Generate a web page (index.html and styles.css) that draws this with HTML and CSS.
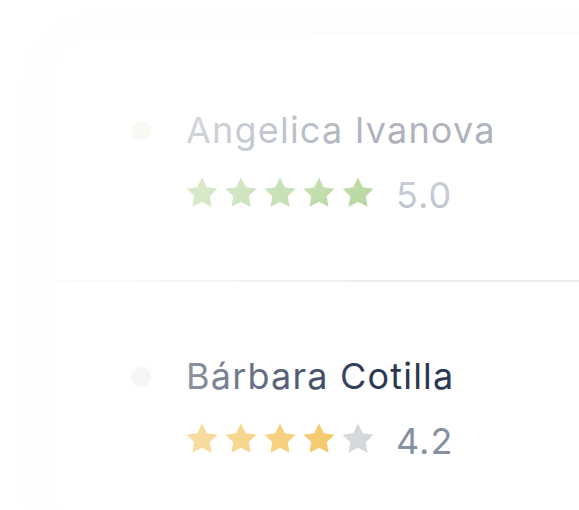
FILE: index.html
```html
<!DOCTYPE html>
<html lang="en">
<head>
<meta charset="utf-8">
<title>Ratings</title>
<link rel="stylesheet" href="styles.css">
</head>
<body>
<div class="stage">
  <div class="card">
    <div class="row row-sep">
      <span class="dot dot-green"></span>
      <div class="info">
        <div class="name">Angelica Ivanova</div>
        <div class="rating">
          <div class="stars stars-green">
            <svg viewBox="0 0 24 24"><path d="M12 1.6l3.2 6.5 7.1 1-5.15 5 1.2 7.1L12 17.85 5.65 21.2l1.2-7.1-5.15-5 7.1-1z"/></svg>
            <svg viewBox="0 0 24 24"><path d="M12 1.6l3.2 6.5 7.1 1-5.15 5 1.2 7.1L12 17.85 5.65 21.2l1.2-7.1-5.15-5 7.1-1z"/></svg>
            <svg viewBox="0 0 24 24"><path d="M12 1.6l3.2 6.5 7.1 1-5.15 5 1.2 7.1L12 17.85 5.65 21.2l1.2-7.1-5.15-5 7.1-1z"/></svg>
            <svg viewBox="0 0 24 24"><path d="M12 1.6l3.2 6.5 7.1 1-5.15 5 1.2 7.1L12 17.85 5.65 21.2l1.2-7.1-5.15-5 7.1-1z"/></svg>
            <svg viewBox="0 0 24 24"><path d="M12 1.6l3.2 6.5 7.1 1-5.15 5 1.2 7.1L12 17.85 5.65 21.2l1.2-7.1-5.15-5 7.1-1z"/></svg>
          </div>
          <span class="score">5.0</span>
        </div>
      </div>
    </div>
    <div class="row">
      <span class="dot dot-grey"></span>
      <div class="info">
        <div class="name">Bárbara Cotilla</div>
        <div class="rating">
          <div class="stars stars-gold">
            <svg viewBox="0 0 24 24"><path d="M12 1.6l3.2 6.5 7.1 1-5.15 5 1.2 7.1L12 17.85 5.65 21.2l1.2-7.1-5.15-5 7.1-1z"/></svg>
            <svg viewBox="0 0 24 24"><path d="M12 1.6l3.2 6.5 7.1 1-5.15 5 1.2 7.1L12 17.85 5.65 21.2l1.2-7.1-5.15-5 7.1-1z"/></svg>
            <svg viewBox="0 0 24 24"><path d="M12 1.6l3.2 6.5 7.1 1-5.15 5 1.2 7.1L12 17.85 5.65 21.2l1.2-7.1-5.15-5 7.1-1z"/></svg>
            <svg viewBox="0 0 24 24"><path d="M12 1.6l3.2 6.5 7.1 1-5.15 5 1.2 7.1L12 17.85 5.65 21.2l1.2-7.1-5.15-5 7.1-1z"/></svg>
            <svg class="star-off" viewBox="0 0 24 24"><path d="M12 1.6l3.2 6.5 7.1 1-5.15 5 1.2 7.1L12 17.85 5.65 21.2l1.2-7.1-5.15-5 7.1-1z"/></svg>
          </div>
          <span class="score">4.2</span>
        </div>
      </div>
    </div>
  </div>
  <div class="fade"></div>
</div>
</body>
</html>
```

FILE: styles.css
```css
html, body {
  margin: 0;
  padding: 0;
  background: #ffffff;
}

.stage {
  position: relative;
  width: 579px;
  height: 510px;
  overflow: hidden;
  font-family: Inter, "Noto Sans", sans-serif;
}

.card {
  margin: 35px 0 0 52px;
  width: 600px;
  background: #ffffff;
  border-top: 1px solid #eceef1;
  border-left: 1px solid #f3f4f6;
  border-radius: 40px 0 0 40px;
  box-shadow: 0 10px 50px rgba(30, 40, 70, 0.05);
}

.row {
  display: flex;
  align-items: flex-start;
  gap: 35px;
  height: 246px;
  padding-left: 78px;
  box-sizing: border-box;
  padding-top: 73px;
}

.row-sep {
  border-bottom: 2px solid #eceef1;
}

.dot {
  flex: none;
  width: 20px;
  height: 20px;
  border-radius: 50%;
  margin-top: 12px;
}

.dot-green { background: #c9e2b6; }
.dot-grey { background: #e6e8ec; }

.info {
  display: flex;
  flex-direction: column;
}

.name {
  font-size: 36px;
  line-height: 42px;
  color: #2b3853;
  letter-spacing: 1.2px;
}

.rating {
  display: flex;
  align-items: flex-start;
  margin-top: 22px;
}

.stars {
  display: flex;
  gap: 3px;
  margin-left: -2px;
  margin-right: 20px;
}

.stars svg {
  width: 36px;
  height: 36px;
  margin-top: 2px;
  display: block;
}

.stars-green svg { fill: #6cae3a; }
.stars-gold svg { fill: #f2c35a; }
.stars-gold .star-off { fill: #d4d7dc; }

.score {
  font-size: 36px;
  line-height: 40px;
  margin-top: 2px;
  letter-spacing: 1px;
  color: #8790a2;
}

.fade {
  position: absolute;
  inset: 0;
  pointer-events: none;
  background:
    linear-gradient(to bottom, rgba(255,255,255,0.7) 0, rgba(255,255,255,0.62) 130px, rgba(255,255,255,0.52) 200px, rgba(255,255,255,0) 285px),
    linear-gradient(to right, rgba(255,255,255,1) 0, rgba(255,255,255,0.45) 190px, rgba(255,255,255,0) 370px);
}
```
